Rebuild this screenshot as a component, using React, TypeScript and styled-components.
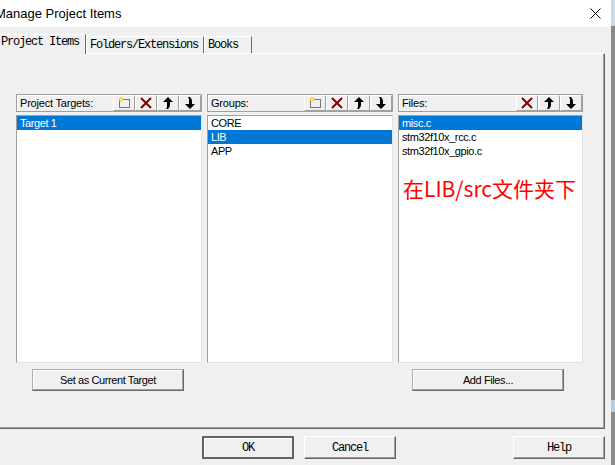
import React from 'react';
import styled, { createGlobalStyle } from 'styled-components';

const GlobalStyle = createGlobalStyle`
  html, body {
    margin: 0;
    padding: 0;
    background: #f0f0f0;
    overflow: hidden;
  }
`;

const Screen = styled.div`
  display: flex;
  width: 615px;
  height: 465px;
  overflow: hidden;
`;

const Window = styled.div`
  flex: none;
  width: 619px;
  margin-left: -8px;
  display: flex;
  flex-direction: column;
  background: #f0f0f0;
`;

const Backdrop = styled.div`
  flex: 1;
  background: linear-gradient(#cbd8e6 0, #cbd8e6 26px, #8a8a8a 26px, #8a8a8a 400px, #b9cde0 400px, #b9cde0 412px, #8a8a8a 412px);
`;

const TitleBar = styled.div`
  height: 27px;
  flex: none;
  display: flex;
  align-items: center;
  padding-left: 3px;
  background: #fff;
  font-family: "Liberation Sans", Arial, sans-serif;
  font-size: 13px;
  color: #000;
`;

const CloseGlyph = styled.svg`
  margin-left: auto;
  margin-right: 10px;
`;

const Body = styled.div`
  flex: 1;
  display: flex;
  flex-direction: column;
  padding: 7px 6px 0 3px;
`;

const TabRow = styled.div`
  display: flex;
  align-items: flex-end;
  height: 19px;
  position: relative;
  z-index: 1;
`;

const Tab = styled.div<{ $active?: boolean; $width: number }>`
  box-sizing: border-box;
  width: ${(p) => p.$width}px;
  height: ${(p) => (p.$active ? 20 : 17)}px;
  margin-bottom: ${(p) => (p.$active ? -1 : 0)}px;
  padding: ${(p) => (p.$active ? '1px 0 0 5px' : '2px 0 0 3px')};
  border-top: 1px solid #fff;
  border-left: 1px solid #fff;
  border-right: 1px solid #696969;
  background: #f0f0f0;
  font-family: "Liberation Mono", "Courier New", monospace;
  font-size: 12px;
  letter-spacing: -1.2px;
  line-height: 13px;
  white-space: nowrap;
  color: #000;
`;

const Panel = styled.div`
  box-sizing: border-box;
  height: 376px;
  border: 1px solid;
  border-color: #fff #696969 #696969 #fff;
  box-shadow: inset -1px -1px 0 #a0a0a0;
  padding: 40px 0 0 20px;
`;

const Columns = styled.div`
  display: grid;
  grid-template-columns: 186px 186px 185px;
  column-gap: 5px;
`;

const Column = styled.div`
  display: flex;
  flex-direction: column;
`;

const Header = styled.div`
  box-sizing: border-box;
  height: 18px;
  display: flex;
  align-items: stretch;
  border: 1px solid #a0a0a0;
  box-shadow: inset 1px 1px 0 #fff;
`;

const HeaderLabel = styled.div`
  flex: 1;
  display: flex;
  align-items: center;
  padding-left: 3px;
  font-family: "Liberation Sans", Arial, sans-serif;
  font-size: 11px;
  letter-spacing: -0.2px;
  color: #000;
`;

const ToolButton = styled.div`
  box-sizing: border-box;
  width: 22px;
  display: flex;
  align-items: center;
  justify-content: center;
  border-left: 1px solid #fff;
  border-right: 1px solid #a0a0a0;
  border-top: 1px solid #fff;
  border-bottom: 1px solid #a0a0a0;
  background: #f0f0f0;
`;

const List = styled.div`
  position: relative;
  box-sizing: border-box;
  height: 248px;
  margin-top: 3px;
  background: #fff;
  border: 1px solid;
  border-color: #a0a0a0 #e3e3e3 #e3e3e3 #a0a0a0;
`;

const Item = styled.div<{ $selected?: boolean }>`
  height: 14px;
  line-height: 14px;
  padding-left: 3px;
  font-family: "Liberation Sans", Arial, sans-serif;
  font-size: 11px;
  letter-spacing: -0.4px;
  white-space: nowrap;
  background: ${(p) => (p.$selected ? '#0078d7' : 'transparent')};
  color: ${(p) => (p.$selected ? '#fff' : '#000')};
`;

const Note = styled.div`
  position: absolute;
  left: 4px;
  top: 60px;
  font-family: "Noto Sans CJK SC", "Noto Sans", sans-serif;
  font-size: 21px;
  line-height: 24px;
  color: #ff0000;
  white-space: nowrap;
`;

const ActionButton = styled.div<{ $shift?: number }>`
  box-sizing: border-box;
  align-self: center;
  width: 152px;
  height: 22px;
  margin-top: 6px;
  margin-left: ${(p) => p.$shift ?? 0}px;
  display: flex;
  align-items: center;
  justify-content: center;
  border: 1px solid;
  border-color: #adadad #696969 #696969 #adadad;
  box-shadow: inset -1px -1px 0 #a0a0a0, inset 1px 1px 0 #fff;
  background: #f0f0f0;
  font-family: "Liberation Sans", Arial, sans-serif;
  font-size: 11px;
  letter-spacing: -0.4px;
  color: #000;
`;

const Footer = styled.div`
  display: flex;
  margin-top: 7px;
  padding-left: 207px;
`;

const DialogButton = styled.div<{ $default?: boolean; $push?: boolean }>`
  box-sizing: border-box;
  width: 92px;
  height: 23px;
  margin-left: ${(p) => (p.$push ? 'auto' : '0')};
  margin-right: 10px;
  display: flex;
  align-items: center;
  justify-content: center;
  background: #f0f0f0;
  font-family: "Liberation Mono", "Courier New", monospace;
  font-size: 12px;
  letter-spacing: -1.2px;
  color: #000;
  border: ${(p) => (p.$default ? '2px solid #646464' : '1px solid')};
  border-color: ${(p) => (p.$default ? '#646464' : '#fff #646464 #646464 #fff')};
  box-shadow: ${(p) => (p.$default ? 'inset 1px 1px 0 #fff' : 'inset -1px -1px 0 #a0a0a0')};
  &:last-child {
    margin-right: 0;
  }
`;

const NewIcon = () => (
  <svg width="13" height="12" viewBox="0 0 13 12">
    <rect x="1.5" y="2.5" width="10" height="8" fill="none" stroke="#000" strokeDasharray="1 1" />
    <path d="M3 0 V5 M0.5 2.5 H5.5 M1 1 L5 4 M5 1 L1 4" stroke="#f5d400" strokeWidth="1" />
    <rect x="2" y="2" width="2" height="1" fill="#fff7a0" />
  </svg>
);

const DeleteIcon = () => (
  <svg width="12" height="12" viewBox="0 0 12 12">
    <path d="M1 1 L11 11 M11 1 L1 11" stroke="#800000" strokeWidth="2" />
  </svg>
);

const UpIcon = () => (
  <svg width="10" height="12" viewBox="0 0 10 12">
    <path d="M5 0 L10 5 L7 5 L7 8 Q7 10 5 12 L3 12 Q4.5 10 4 8 L4 5 L0 5 Z" fill="#000" />
  </svg>
);

const DownIcon = () => (
  <svg width="10" height="12" viewBox="0 0 10 12">
    <path d="M5 12 L10 7 L7 7 L7 4 Q7 2 5 0 L3 0 Q4.5 2 4 4 L4 7 L0 7 Z" fill="#000" />
  </svg>
);

interface GroupProps {
  label: string;
  canCreate?: boolean;
  items: string[];
  selected: number;
  action?: string;
  actionShift?: number;
  children?: React.ReactNode;
}

function Group(props: GroupProps) {
  return (
    <Column>
      <Header>
        <HeaderLabel>{props.label}</HeaderLabel>
        {props.canCreate ? (
          <ToolButton>
            <NewIcon />
          </ToolButton>
        ) : ''}
        <ToolButton>
          <DeleteIcon />
        </ToolButton>
        <ToolButton>
          <UpIcon />
        </ToolButton>
        <ToolButton>
          <DownIcon />
        </ToolButton>
      </Header>
      <List>
        {props.items.map((item, i) => (
          <Item key={item} $selected={i === props.selected}>
            {item}
          </Item>
        ))}
        {props.children}
      </List>
      {props.action ? (
        <ActionButton $shift={props.actionShift}>{props.action}</ActionButton>
      ) : ''}
    </Column>
  );
}

export default function App() {
  return (
    <Screen>
      <GlobalStyle />
      <Window>
        <TitleBar>
          Manage Project Items
          <CloseGlyph width="11" height="11" viewBox="0 0 11 11">
            <path d="M0.5 0.5 L10.5 10.5 M10.5 0.5 L0.5 10.5" stroke="#000" strokeWidth="1" />
          </CloseGlyph>
        </TitleBar>
        <Body>
          <TabRow>
            <Tab $active $width={91}>Project Items</Tab>
            <Tab $width={118}>Folders/Extensions</Tab>
            <Tab $width={48}>Books</Tab>
          </TabRow>
          <Panel>
            <Columns>
              <Group
                label="Project Targets:"
                canCreate
                items={['Target 1']}
                selected={0}
                action="Set as Current Target"
                actionShift={-2}
              />
              <Group label="Groups:" canCreate items={['CORE', 'LIB', 'APP']} selected={1} />
              <Group
                label="Files:"
                items={['misc.c', 'stm32f10x_rcc.c', 'stm32f10x_gpio.c']}
                selected={0}
                action="Add Files..."
                actionShift={-5}
              >
                <Note>在LIB/src文件夹下</Note>
              </Group>
            </Columns>
          </Panel>
          <Footer>
            <DialogButton $default>OK</DialogButton>
            <DialogButton>Cancel</DialogButton>
            <DialogButton $push>Help</DialogButton>
          </Footer>
        </Body>
      </Window>
      <Backdrop />
    </Screen>
  );
}
